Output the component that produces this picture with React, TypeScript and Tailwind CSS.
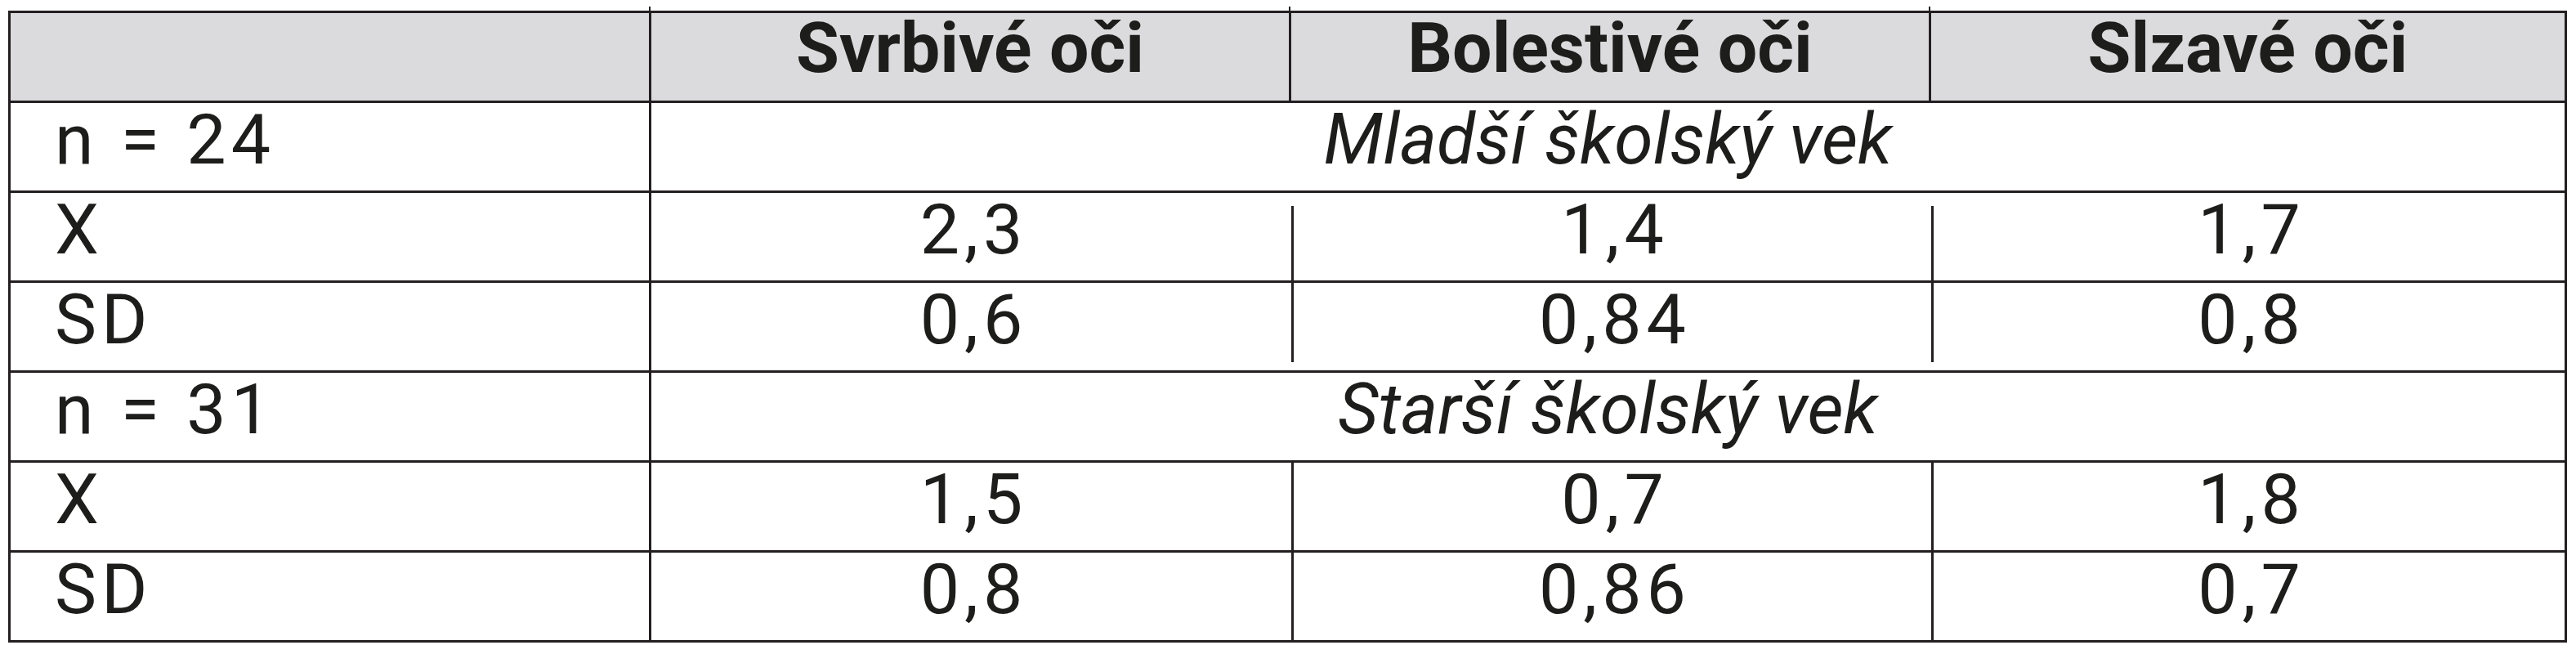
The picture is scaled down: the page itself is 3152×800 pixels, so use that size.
const font = { fontFamily: "Roboto, 'Liberation Sans', Arial, sans-serif" };

const headers = ["Svrbivé oči", "Bolestivé oči", "Slzavé oči"];

const groups = [
  {
    n: "n = 24",
    label: "Mladší školský vek",
    gapped: true,
    rows: [
      { name: "X", values: ["2,3", "1,4", "1,7"] },
      { name: "SD", values: ["0,6", "0,84", "0,8"] },
    ],
  },
  {
    n: "n = 31",
    label: "Starší školský vek",
    gapped: false,
    rows: [
      { name: "X", values: ["1,5", "0,7", "1,8"] },
      { name: "SD", values: ["0,8", "0,86", "0,7"] },
    ],
  },
];

// column divider inside data rows; the first group's lines stop short of the row borders
const Divider = ({ top, bottom }: { top?: boolean; bottom?: boolean }) => (
  <div
    className={`w-[3px] shrink-0 bg-[#231f20] ${top ? "mt-[16px]" : ""} ${bottom ? "mb-[10px]" : ""}`}
  />
);

const Label = ({ children }: { children: React.ReactNode }) => (
  <div className="w-[781px] shrink-0 flex items-center pl-[54px] pb-[17px] tracking-[6px]">
    {children}
  </div>
);

const App = () => {
  return (
    <div className="bg-white w-[3152px] h-[800px] pl-[10px] pt-[8px] text-[#1d1d1b]" style={font}>
      {/* little ticks where the column lines run over the top rule */}
      <div className="flex h-[5px]">
        <div className="w-[784px]" />
        <div className="w-[2px] bg-[#231f20]" />
        <div className="w-[781px]" />
        <div className="w-[2px] bg-[#231f20]" />
        <div className="w-[781px]" />
        <div className="w-[2px] bg-[#231f20]" />
      </div>

      <div className="w-[3131px] border-[3px] border-[#231f20] flex flex-col text-[86px] leading-none">
        {/* header */}
        <div className="flex h-[107px] bg-[#dbdbdd]">
          <div className="w-[781px] shrink-0" />
          {headers.map((h, i) => (
            <div
              key={h}
              className={`${i < 2 ? "w-[783px]" : "flex-1"} shrink-0 border-l-[3px] border-[#231f20] flex items-center justify-center pb-[21px] font-bold`}
            >
              {h}
            </div>
          ))}
        </div>

        {groups.map((g) => (
          <div key={g.n} className="flex flex-col">
            <div className="flex h-[110px] border-t-[3px] border-[#231f20]">
              <Label>{g.n}</Label>
              <div className="flex-1 border-l-[3px] border-[#231f20] flex items-center justify-center pb-[17px] italic">
                {g.label}
              </div>
            </div>

            {g.rows.map((r, ri) => (
              <div key={r.name} className="flex h-[110px] border-t-[3px] border-[#231f20]">
                <Label>{r.name}</Label>
                <div className="w-[3px] shrink-0 bg-[#231f20]" />
                {r.values.map((v, vi) => (
                  <div key={vi} className={`${vi < 2 ? "w-[783px]" : "flex-1"} shrink-0 flex`}>
                    {vi > 0 && (
                      <Divider top={g.gapped && ri === 0} bottom={g.gapped && ri === 1} />
                    )}
                    <div className="flex-1 flex items-center justify-center pb-[17px] pl-[6px] tracking-[6px]">
                      {v}
                    </div>
                  </div>
                ))}
              </div>
            ))}
          </div>
        ))}
      </div>
    </div>
  );
};

export default App;
